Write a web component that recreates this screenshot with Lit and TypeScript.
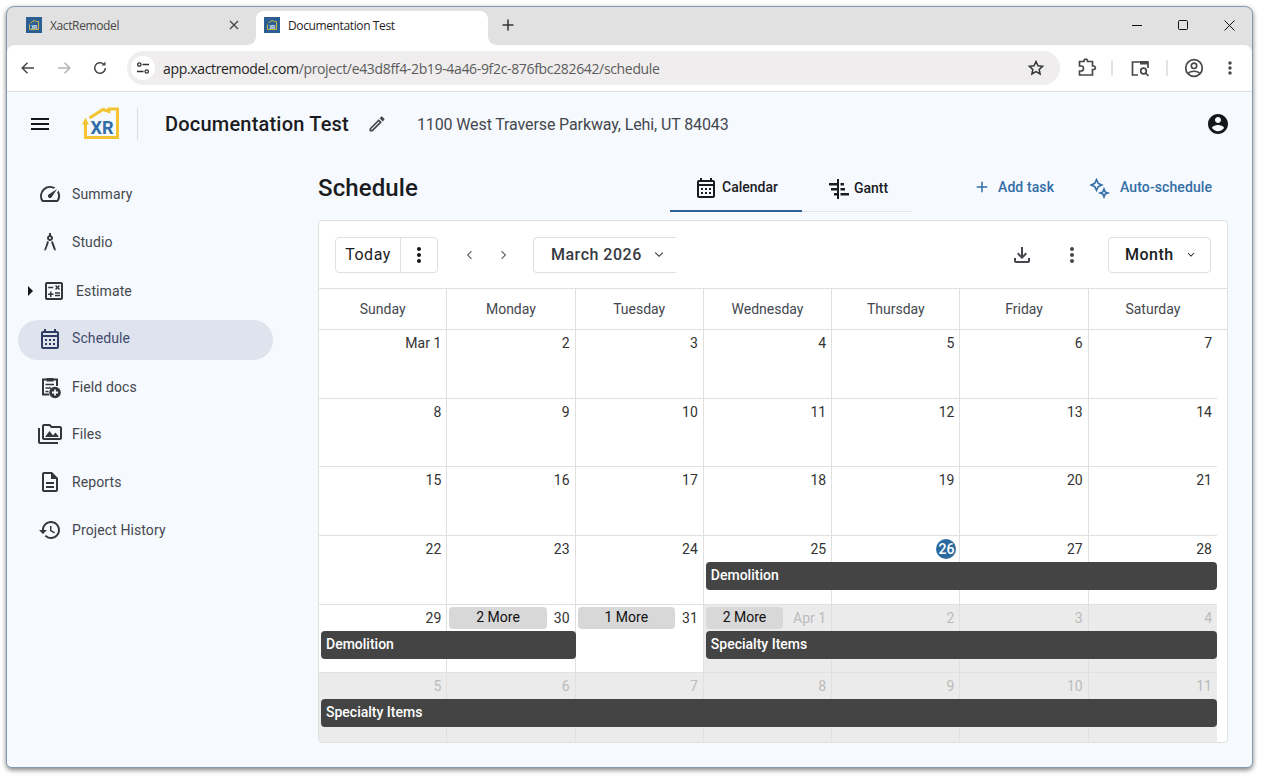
import { css, html, LitElement, svg } from "lit";
import { customElement } from "lit/decorators.js";

const ICONS = {
  menu: "M3 18h18v-2H3v2zm0-5h18v-2H3v2zm0-7v2h18V6H3z",
  edit: "M14.06 9.02l.92.92L5.92 19H5v-.92l9.06-9.06M17.66 3c-.25 0-.51.1-.7.29l-1.83 1.83 3.75 3.75 1.83-1.83c.39-.39.39-1.02 0-1.41l-2.34-2.34c-.2-.2-.45-.29-.71-.29zm-3.6 3.19L3 17.25V21h3.75L17.81 9.94l-3.75-3.75z",
  account: "M12 2C6.48 2 2 6.48 2 12s4.48 10 10 10 10-4.48 10-10S17.52 2 12 2zm0 3c1.66 0 3 1.34 3 3s-1.34 3-3 3-3-1.34-3-3 1.34-3 3-3zm0 14.2c-2.5 0-4.71-1.28-6-3.22.03-1.99 4-3.08 6-3.08 1.99 0 5.97 1.09 6 3.08-1.29 1.94-3.5 3.22-6 3.22z",
  speed: "M20.38 8.57l-1.23 1.85a8 8 0 0 1-.22 7.58H5.07A8 8 0 0 1 15.58 6.85l1.85-1.23A10 10 0 0 0 3.35 19a2 2 0 0 0 1.72 1h13.85a2 2 0 0 0 1.74-1 10 10 0 0 0-.27-10.44zm-9.79 6.84a2 2 0 0 0 2.83 0l5.66-8.49-8.49 5.66a2 2 0 0 0 0 2.83z",
  studio: "M6.36 18.78L6.61 21l1.62-1.54 2.77-7.6c-.68-.17-1.28-.51-1.77-.98l-2.87 8.9zM14.77 10.88c-.49.47-1.1.81-1.77.98l2.77 7.6L17.39 21l.26-2.22-2.88-7.9zM15 8c0-1.3-.84-2.4-2-2.82V3h-2v2.18C9.84 5.6 9 6.7 9 8c0 1.66 1.34 3 3 3s3-1.34 3-3zm-3 1c-.55 0-1-.45-1-1s.45-1 1-1 1 .45 1 1-.45 1-1 1z",
  calc: "M19 3H5c-1.1 0-2 .9-2 2v14c0 1.1.9 2 2 2h14c1.1 0 2-.9 2-2V5c0-1.1-.9-2-2-2zm0 16H5V5h14v14zM6.25 7.72h5v1.5h-5zM13 15.75h5v1.5h-5zM13 13.25h5v1.5h-5zM8 18h1.5v-2h2v-1.5h-2v-2H8v2H6V16h2zM14.09 10.95l1.41-1.41 1.41 1.41 1.06-1.06-1.41-1.42 1.41-1.41-1.06-1.06-1.41 1.41-1.41-1.41-1.06 1.06 1.41 1.41-1.41 1.42z",
  calendar: "M19 4h-1V2h-2v2H8V2H6v2H5c-1.11 0-2 .9-2 2v14c0 1.1.89 2 2 2h14c1.1 0 2-.9 2-2V6c0-1.1-.9-2-2-2zm0 16H5V10h14v10zm0-12H5V6h14v2zM9 14H7v-2h2v2zm4 0h-2v-2h2v2zm4 0h-2v-2h2v2zm-8 4H7v-2h2v2zm4 0h-2v-2h2v2zm4 0h-2v-2h2v2z",
  files: "M2 6H0v5h.01L0 20c0 1.1.9 2 2 2h18v-2H2V6zm5 9h14l-3.5-4.5-2.5 3.01L11.5 9zM22 4h-8l-2-2H6c-1.1 0-1.99.9-1.99 2L4 16c0 1.1.9 2 2 2h16c1.1 0 2-.9 2-2V6c0-1.1-.9-2-2-2zm0 12H6V4h5.17l1.41 1.41.59.59H22v10z",
  report: "M8 16h8v2H8zm0-4h8v2H8zm6-10H6c-1.1 0-2 .9-2 2v16c0 1.1.89 2 1.99 2H18c1.1 0 2-.9 2-2V8l-6-6zm4 18H6V4h7v5h5v11z",
  history: "M13 3c-4.97 0-9 4.03-9 9H1l3.89 3.89.07.14L9 12H6c0-3.87 3.13-7 7-7s7 3.13 7 7-3.13 7-7 7c-1.93 0-3.68-.79-4.94-2.06l-1.42 1.42C8.27 19.99 10.51 21 13 21c4.97 0 9-4.03 9-9s-4.03-9-9-9zm-1 5v5l4.28 2.54.72-1.21-3.5-2.08V8H12z",
  download: "M18 15v3H6v-3H4v3c0 1.1.9 2 2 2h12c1.1 0 2-.9 2-2v-3h-2zm-1-4l-1.41-1.41L13 12.17V4h-2v8.17L8.41 9.59 7 11l5 5 5-5z",
  more: "M12 8c1.1 0 2-.9 2-2s-.9-2-2-2-2 .9-2 2 .9 2 2 2zm0 2c-1.1 0-2 .9-2 2s.9 2 2 2 2-.9 2-2-.9-2-2-2zm0 6c-1.1 0-2 .9-2 2s.9 2 2 2 2-.9 2-2-.9-2-2-2z",
  gantt: "M11 2h2v20h-2zM3 6h8v2.500H3zM5 11h6v2.500H5zM8 16h3v2.500H8zM14.500 6H18v2.500h-3.500zM14.500 11H19v2.500h-4.500zM14.500 16H23v2.500h-8.500z",
  plus: "M19 13h-6v6h-2v-6H5v-2h6V5h2v6h6v2z",
  chevL: "M14.500 7l-5 5 5 5 .9-.9-4.100-4.100 4.100-4.100z",
  chevR: "M9.500 7l5 5-5 5-.9-.9 4.100-4.100-4.100-4.100z",
  chevD: "M7 9.500l5 5 5-5-.9-.9-4.100 4.100-4.100-4.100z",
};

type IconName = keyof typeof ICONS;

const icon = (name: IconName, size = 24) => html`<svg
  class="icon"
  width=${size}
  height=${size}
  viewBox="0 0 24 24"
  fill="currentColor"
>
  <path d=${ICONS[name]}></path>
</svg>`;

const favicon = html`<svg class="favicon" width="16" height="16" viewBox="0 0 16 16">
  <rect width="16" height="16" fill="#2b5f93"></rect>
  <path d="M3.500 7.500V12.500H12.500V4.500H10.500L8 3.500L4.500 6" fill="none" stroke="#c9b24a" stroke-width="1"></path>
  <text x="8" y="11.500" text-anchor="middle" font-size="5" font-weight="700" font-family="Roboto" fill="#dfe8f2">XR</text>
</svg>`;

const logo = html`<svg class="logo" width="38" height="34" viewBox="0 0 38 34">
  <path d="M3.500 15V30.500H35.500V2H27V4.500L21 2.500L7.500 11" fill="none" stroke="#f4c331" stroke-width="3"></path>
  <path d="M0 17.500L3.500 10.500L7 17.500z" fill="#f4c331"></path>
  <text x="20" y="27" text-anchor="middle" font-size="18" font-weight="700" font-family="Roboto" fill="#2f6ea8">XR</text>
</svg>`;

const fieldDocs = html`<svg class="icon" width="24" height="24" viewBox="0 0 24 24" fill="none" stroke="currentColor" stroke-width="2">
  <path d="M11 19.500H5V4.500H19V11"></path>
  <path d="M8.500 3H15.500V6.500H8.500z" fill="currentColor" stroke="none"></path>
  <path d="M7.500 9.500H16M7.500 13H13M7.500 16.500H10.500" stroke-width="1.700"></path>
  <circle cx="17" cy="17.500" r="5.800" fill="currentColor" stroke="none"></circle>
  <path d="M17 14.500V20.500M14 17.500H20" stroke="#f6f9fd" stroke-width="1.800"></path>
</svg>`;

const sparkle = html`<svg class="icon" width="24" height="24" viewBox="0 0 24 24" fill="none" stroke="currentColor" stroke-width="1.600">
  <path d="M8.500 4.700L10.200 8.300L13.800 10L10.200 11.700L8.500 15.300L6.800 11.700L3.200 10L6.800 8.300z"></path>
  <path d="M16 14L17.100 16.900L20 18L17.100 19.100L16 22L14.900 19.100L12 18L14.900 16.900z"></path>
</svg>`;

const stroke = (body: unknown, size = 24) => html`<svg
  class="icon"
  width=${size}
  height=${size}
  viewBox="0 0 24 24"
  fill="none"
  stroke="#474747"
  stroke-width="1.700"
>
  ${body}
</svg>`;

type Cell = { label: string; more?: string; out?: boolean; today?: boolean };
type Bar = { text: string; from: number; to: number; top: number };
type Week = { cells: Cell[]; bars: Bar[] };

const d = (label: string | number, more?: string): Cell => ({ label: String(label), more });
const o = (label: string | number, more?: string): Cell => ({ label: String(label), more, out: true });

const WEEKS: Week[] = [
  { cells: [d("Mar 1"), d(2), d(3), d(4), d(5), d(6), d(7)], bars: [] },
  { cells: [d(8), d(9), d(10), d(11), d(12), d(13), d(14)], bars: [] },
  { cells: [d(15), d(16), d(17), d(18), d(19), d(20), d(21)], bars: [] },
  {
    cells: [d(22), d(23), d(24), d(25), { label: "26", today: true }, d(27), d(28)],
    bars: [{ text: "Demolition", from: 4, to: 8, top: 26 }],
  },
  {
    cells: [d(29), d(30, "2 More"), d(31, "1 More"), o("Apr 1", "2 More"), o(2), o(3), o(4)],
    bars: [
      { text: "Demolition", from: 1, to: 3, top: 26.5 },
      { text: "Specialty Items", from: 4, to: 8, top: 26.5 },
    ],
  },
  {
    cells: [o(5), o(6), o(7), o(8), o(9), o(10), o(11)],
    bars: [{ text: "Specialty Items", from: 1, to: 8, top: 26 }],
  },
];

const DAYS = ["Sunday", "Monday", "Tuesday", "Wednesday", "Thursday", "Friday", "Saturday"];

const NAV = [
  { glyph: icon("speed"), label: "Summary", cls: "" },
  { glyph: icon("studio"), label: "Studio", cls: "" },
  { glyph: icon("calc"), label: "Estimate", cls: "caret" },
  { glyph: icon("calendar"), label: "Schedule", cls: "active" },
  { glyph: fieldDocs, label: "Field docs", cls: "low" },
  { glyph: icon("files"), label: "Files", cls: "" },
  { glyph: icon("report"), label: "Reports", cls: "" },
  { glyph: icon("history"), label: "Project History", cls: "" },
];

@customElement("app-root")
export class AppRoot extends LitElement {
  static styles = css`
    :host {
      display: block;
      width: 1262px;
      height: 777px;
      box-sizing: border-box;
      padding: 6px 9px 9px 6px;
      background: #fff;
      font-family: Roboto, "Liberation Sans", sans-serif;
      overflow: hidden;
    }
    .icon {
      display: block;
      flex: none;
    }
    .window {
      height: 100%;
      box-sizing: border-box;
      border: 1px solid #7f9ab5;
      border-radius: 8px 8px 6px 6px;
      box-shadow: 0 2px 5px rgba(0, 0, 0, 0.5);
      background: #e1e1e1;
      overflow: hidden;
      display: flex;
      flex-direction: column;
    }

    /* browser chrome */
    .tabstrip {
      height: 38px;
      flex: none;
      display: flex;
      align-items: flex-end;
      padding-left: 7px;
      font-family: "Open Sans", "Noto Sans", sans-serif;
      font-size: 12px;
      letter-spacing: -0.38px;
    }
    .tab {
      width: 232px;
      box-sizing: border-box;
      height: 34px;
      display: flex;
      align-items: center;
      gap: 8px;
      padding: 0 7px 6px 12px;
      color: #474747;
      border-radius: 8px 8px 0 0;
      position: relative;
    }
    .tab.active {
      background: #fff;
      color: #1f1f1f;
      margin-left: 10px;
      padding-left: 8px;
    }
    .tab.active::before,
    .tab.active::after {
      content: "";
      position: absolute;
      bottom: 0;
      width: 8px;
      height: 8px;
    }
    .tab.active::before {
      left: -8px;
      background: radial-gradient(circle at 0 0, transparent 7.5px, #fff 8px);
    }
    .tab.active::after {
      right: -8px;
      background: radial-gradient(circle at 100% 0, transparent 7.5px, #fff 8px);
    }
    .tab span {
      flex: 1;
    }
    .new-tab {
      margin-left: 14px;
      height: 34px;
      padding-bottom: 6px;
      box-sizing: border-box;
      display: flex;
      align-items: center;
    }
    .winctl {
      margin-left: auto;
      height: 38px;
      padding-bottom: 2px;
      box-sizing: border-box;
      display: flex;
      align-items: center;
    }
    .winctl div {
      width: 46px;
      display: flex;
      justify-content: center;
    }
    .browserbar {
      height: 47px;
      flex: none;
      box-sizing: border-box;
      background: #fff;
      border-bottom: 1px solid #dfdfdf;
      border-radius: 8px 8px 0 0;
      display: flex;
      align-items: center;
      padding-left: 3px;
    }
    .navbtn {
      width: 36px;
      display: flex;
      justify-content: center;
      color: #474747;
    }
    .navbtn.off {
      color: #b4b4b4;
    }
    .omnibox {
      width: 933px;
      height: 34px;
      margin-left: 9px;
      flex: none;
      box-sizing: border-box;
      border-radius: 17px;
      background: #efedee;
      display: flex;
      align-items: center;
      padding: 0 15px 0 4px;
      font-family: "Open Sans", "Noto Sans", sans-serif;
      font-size: 14px;
      letter-spacing: -0.34px;
      color: #1f1f1f;
    }
    .tune {
      width: 24px;
      height: 24px;
      border-radius: 50%;
      background: #fff;
      display: flex;
      align-items: center;
      justify-content: center;
      margin-right: 8px;
      flex: none;
    }
    .url {
      flex: 1;
      white-space: nowrap;
    }
    .url i {
      font-style: normal;
      color: #5c5c5c;
    }
    .tools {
      display: flex;
      align-items: center;
      margin-left: 15px;
    }
    .sep {
      width: 2px;
      height: 16px;
      background: #e3e3e3;
    }
    .tools .ext {
      margin-right: 12px;
    }
    .tools .lens {
      margin: 0 14px 0 15px;
    }
    .tools .profile {
      margin-left: 14px;
    }
    .tools .kebab {
      margin-left: 14px;
      color: #474747;
    }

    /* app */
    .app {
      flex: 1;
      min-height: 0;
      background: #f6f9fd;
      display: flex;
      flex-direction: column;
    }
    .appbar {
      height: 64px;
      flex: none;
      display: flex;
      align-items: center;
      padding-right: 22px;
    }
    .appbar .ham {
      margin-left: 21px;
      color: #15171a;
    }
    .logo {
      display: block;
      margin-left: 30px;
      flex: none;
    }
    .vr {
      width: 1px;
      height: 32px;
      margin-left: 17px;
      background: #d9dde2;
    }
    .project {
      margin-left: 27px;
      font-size: 20px;
      font-weight: 500;
      color: #1a1c1f;
      letter-spacing: 0.2px;
    }
    .pencil {
      margin-left: 18px;
      color: #44474e;
    }
    .address {
      margin-left: 30px;
      font-size: 16px;
      letter-spacing: -0.12px;
      color: #44474e;
    }
    .me {
      margin-left: auto;
      color: #15171a;
    }
    .body {
      flex: 1;
      display: flex;
      min-height: 0;
    }
    .sidebar {
      width: 311px;
      flex: none;
      box-sizing: border-box;
      padding: 18px 0 0 11px;
      display: flex;
      flex-direction: column;
      gap: 8px;
    }
    .nav {
      width: 255px;
      height: 40px;
      flex: none;
      box-sizing: border-box;
      border-radius: 20px;
      display: flex;
      align-items: center;
      gap: 10px;
      padding-left: 20px;
      font-size: 14px;
      letter-spacing: 0.1px;
      color: #44474e;
      position: relative;
    }
    .nav .icon {
      color: #33363d;
    }
    .nav.active {
      background: #dfe3ee;
      color: #3f4a6b;
      margin: 2px 0 -2px;
      padding-bottom: 4px;
    }
    .nav.active .icon {
      color: #2f3d66;
      margin-top: 2px;
    }
    .nav.low {
      padding-top: 2px;
    }
    .nav.caret {
      padding-left: 24px;
      padding-top: 2px;
    }
    .nav.caret::before {
      content: "";
      position: absolute;
      left: 10px;
      top: 16px;
      border-left: 5px solid #15171a;
      border-top: 5px solid transparent;
      border-bottom: 5px solid transparent;
    }
    .main {
      width: 910px;
      flex: none;
      display: flex;
      flex-direction: column;
      padding-top: 9px;
    }
    .head {
      height: 47px;
      display: flex;
      align-items: flex-start;
    }
    .head h1 {
      margin: 0;
      width: 352px;
      font-size: 24px;
      letter-spacing: 0.1px;
      line-height: 46px;
      font-weight: 500;
      color: #1a1c1f;
      flex: none;
    }
    .viewtabs {
      display: flex;
      width: 242px;
      height: 47px;
      flex: none;
      box-sizing: border-box;
      border-bottom: 1px solid #e2e6ea;
    }
    .viewtab {
      height: 47px;
      flex: none;
      box-sizing: border-box;
      display: flex;
      align-items: center;
      justify-content: center;
      gap: 4px;
      padding-bottom: 2px;
      font-size: 14px;
      font-weight: 500;
      color: #1a1c1f;
    }
    .viewtab .icon {
      margin-top: 2px;
    }
    .viewtab.on {
      width: 132px;
      border-bottom: 2px solid #2a6499;
    }
    .viewtab.off {
      width: 110px;
    }
    .action {
      display: flex;
      align-items: center;
      height: 43px;
      font-size: 14px;
      letter-spacing: 0.1px;
      font-weight: 500;
      color: #336ea6;
      gap: 7px;
      flex: none;
    }
    .action.add {
      margin-left: 61px;
    }
    .action.auto {
      margin-left: 34px;
      gap: 8px;
    }
    .card {
      margin-top: 8px;
      height: 523px;
      box-sizing: border-box;
      border: 1px solid #e0e0e0;
      border-radius: 4px;
      background: #fff;
      overflow: hidden;
    }
    .cal-tools {
      height: 68px;
      box-sizing: border-box;
      border-bottom: 1px solid #e0e0e0;
      display: flex;
      align-items: center;
      padding: 0 16px;
    }
    .group {
      display: flex;
      height: 36px;
      box-sizing: border-box;
      border: 1px solid #e0e0e0;
      border-radius: 4px;
      align-items: center;
      font-size: 16px;
      color: #1a1c1f;
      letter-spacing: 0.5px;
    }
    .group .today {
      width: 65px;
      height: 100%;
      box-sizing: border-box;
      display: flex;
      align-items: center;
      justify-content: center;
      border-right: 1px solid #e0e0e0;
    }
    .group .dots {
      width: 36px;
      display: flex;
      justify-content: center;
      color: #15171a;
    }
    .arrow {
      width: 35px;
      display: flex;
      justify-content: center;
      color: #55585f;
    }
    .arrows {
      display: flex;
      margin-left: 13px;
      margin-right: 12px;
    }
    .select {
      height: 36px;
      box-sizing: border-box;
      border: 1px solid #e0e0e0;
      border-radius: 4px;
      display: flex;
      align-items: center;
      font-size: 16px;
      font-weight: 500;
      letter-spacing: 0.5px;
      color: #36393f;
    }
    .select.month {
      width: 143px;
      border-right: 0;
      border-radius: 4px 0 0 4px;
      padding-left: 17px;
      gap: 7px;
    }
    .select.range {
      width: 103px;
      padding-left: 16px;
      gap: 9px;
      color: #1a1c1f;
    }
    .spacer {
      flex: 1;
    }
    .tool {
      color: #44474e;
      display: flex;
    }
    .tool.dl {
      margin-right: 26px;
    }
    .tool.mv {
      margin-right: 24px;
    }
    .grid-head,
    .week {
      display: grid;
      grid-template-columns: repeat(7, minmax(0, 1fr));
      margin-right: 10px;
    }
    .head-wrap {
      height: 41.2px;
      box-sizing: border-box;
      border-bottom: 1px solid #e0e0e0;
    }
    .grid-head {
      height: 100%;
    }
    .grid-head div {
      display: flex;
      align-items: center;
      justify-content: center;
      font-size: 14px;
      color: #44474e;
      border-right: 1px solid #e0e0e0;
    }
    .grid-head div:last-child {
      border-right: 0;
    }
    .week {
      height: 68.6px;
      box-sizing: border-box;
      border-bottom: 1px solid #e0e0e0;
      grid-template-rows: 1fr;
    }
    .week:last-child {
      height: 70px;
      border-bottom: 0;
    }
    .cell {
      grid-row: 1;
      min-width: 0;
      border-right: 1px solid #e0e0e0;
      display: flex;
      align-items: flex-start;
      justify-content: flex-end;
      padding: 2px 5px 0 2px;
      font-size: 14px;
      line-height: 23px;
      color: #333;
    }
    .cell:nth-child(7) {
      border-right: 0;
    }
    .cell.out {
      background: #ebebeb;
      color: #bbb;
    }
    .cell .num {
      white-space: nowrap;
    }
    .cell .today {
      width: 20px;
      height: 20px;
      margin: 1px -2px 0 0;
      border-radius: 50%;
      background: #2a6a9e;
      color: #fff;
      text-align: center;
      line-height: 20px;
      font-weight: 500;
    }
    .more {
      flex: 1;
      height: 22px;
      margin-right: 7px;
      border-radius: 4px;
      background: #d8d8d8;
      color: #111;
      text-align: center;
      line-height: 21px;
      white-space: nowrap;
    }
    .cell.out .more {
      margin-right: 10px;
    }
    .bar {
      grid-row: 1;
      align-self: start;
      height: 28px;
      margin-left: 2px;
      box-sizing: border-box;
      border-radius: 4px;
      background: #444;
      color: #fff;
      font-size: 14px;
      font-weight: 500;
      line-height: 26px;
      padding-left: 5px;
      z-index: 1;
    }
  `;

  private renderChrome() {
    return html`
      <div class="tabstrip">
        <div class="tab">
          ${favicon}<span>XactRemodel</span>
          <svg width="10" height="10" viewBox="0 0 10 10" stroke="#474747" stroke-width="1.400"><path d="M1 1L9 9M9 1L1 9"></path></svg>
        </div>
        <div class="tab active">${favicon}<span>Documentation Test</span></div>
        <div class="new-tab">
          <svg width="12" height="12" viewBox="0 0 12 12" stroke="#333" stroke-width="1.500"><path d="M6 0.500V11.500M0.500 6H11.500"></path></svg>
        </div>
        <div class="winctl">
          <div><svg width="10" height="10" viewBox="0 0 10 10" stroke="#111" stroke-width="1"><path d="M0 5.500H10"></path></svg></div>
          <div><svg width="10" height="10" viewBox="0 0 10 10" fill="none" stroke="#111" stroke-width="1"><rect x="0.500" y="0.500" width="9" height="9" rx="1"></rect></svg></div>
          <div><svg width="11" height="11" viewBox="0 0 11 11" stroke="#111" stroke-width="1"><path d="M0.500 0.500L10.500 10.500M10.500 0.500L0.500 10.500"></path></svg></div>
        </div>
      </div>
      <div class="browserbar">
        <div class="navbtn">
          <svg width="16" height="16" viewBox="0 0 16 16" fill="none" stroke="currentColor" stroke-width="1.500"><path d="M14 8H2.500M7.500 2.800L2.200 8L7.500 13.200"></path></svg>
        </div>
        <div class="navbtn off">
          <svg width="16" height="16" viewBox="0 0 16 16" fill="none" stroke="currentColor" stroke-width="1.500"><path d="M2 8H13.500M8.500 2.800L13.800 8L8.500 13.200"></path></svg>
        </div>
        <div class="navbtn">
          <svg width="16" height="16" viewBox="0 0 16 16" fill="none" stroke="currentColor" stroke-width="1.500"><path d="M13.300 8A5.300 5.300 0 1 1 11.500 4"></path><path d="M13.500 1.500V5.500H9.500" fill="currentColor" stroke="none"></path></svg>
        </div>
        <div class="omnibox">
          <div class="tune">
            <svg width="14" height="14" viewBox="0 0 14 14" fill="none" stroke="#333" stroke-width="1.300"><circle cx="3.300" cy="3.500" r="1.700"></circle><path d="M6.500 3.500H13M1 10.500H7.500"></path><circle cx="10.700" cy="10.500" r="1.700"></circle></svg>
          </div>
          <div class="url">app.xactremodel.com<i>/project/e43d8ff4-2b19-4a46-9f2c-876fbc282642/schedule</i></div>
          <svg width="18" height="18" viewBox="0 0 18 18" fill="none" stroke="#333" stroke-width="1.500"><path d="M9 2.500L11 6.800L15.600 7.300L12.200 10.400L13.100 15L9 12.700L4.900 15L5.800 10.400L2.400 7.300L7 6.800z"></path></svg>
        </div>
        <div class="tools">
          <div class="ext">
            ${stroke(svg`<path d="M5 5.500H9.500V4.500A1.800 1.800 0 0 1 13 4.500V5.500H18V10H19.500A1.800 1.800 0 0 1 19.500 13.500H18V19H5V15H6.500A2.500 2.500 0 0 0 6.500 10H5z" transform="translate(-0.500 0)"></path>`)}
          </div>
          <div class="sep"></div>
          <div class="lens">
            ${stroke(svg`<path d="M10 19H4.500V6H20V12"></path><rect x="12" y="5" width="8" height="3.500" fill="#474747" stroke="none"></rect><circle cx="15.500" cy="15" r="2.800"></circle><path d="M17.500 17L20.500 20"></path>`)}
          </div>
          <div class="sep"></div>
          <div class="profile">
            ${stroke(svg`<circle cx="12" cy="12" r="8.300"></circle><circle cx="12" cy="9.800" r="2.700"></circle><path d="M6.500 17.500C8 14.500 16 14.500 17.500 17.500"></path>`)}
          </div>
          <div class="kebab">${icon("more", 20)}</div>
        </div>
      </div>
    `;
  }

  private renderCalendar() {
    return html`
      <div class="head-wrap">
        <div class="grid-head">${DAYS.map((day) => html`<div>${day}</div>`)}</div>
      </div>
      ${WEEKS.map(
        (week) => html`
          <div class="week">
            ${week.cells.map(
              (c, i) => html`
                <div class="cell ${c.out ? "out" : ""}" style="grid-column:${i + 1}">
                  ${c.more ? html`<div class="more">${c.more}</div>` : ""}
                  <div class="num ${c.today ? "today" : ""}">${c.label}</div>
                </div>
              `
            )}
            ${week.bars.map(
              (b) => html`<div
                class="bar"
                style="grid-column:${b.from}/${b.to};margin-top:${b.top}px"
              >
                ${b.text}
              </div>`
            )}
          </div>
        `
      )}
    `;
  }

  render() {
    return html`
      <div class="window">
        ${this.renderChrome()}
        <div class="app">
          <div class="appbar">
            <div class="ham">${icon("menu")}</div>
            ${logo}
            <div class="vr"></div>
            <div class="project">Documentation Test</div>
            <div class="pencil">${icon("edit", 20)}</div>
            <div class="address">1100 West Traverse Parkway, Lehi, UT 84043</div>
            <div class="me">${icon("account")}</div>
          </div>
          <div class="body">
            <nav class="sidebar">
              ${NAV.map((n) => html`<div class="nav ${n.cls}">${n.glyph}<span>${n.label}</span></div>`)}
            </nav>
            <div class="main">
              <div class="head">
                <h1>Schedule</h1>
                <div class="viewtabs">
                  <div class="viewtab on">${icon("calendar")}Calendar</div>
                  <div class="viewtab off">${icon("gantt")}Gantt</div>
                </div>
                <div class="action add">${icon("plus", 18)}Add task</div>
                <div class="action auto">${sparkle}Auto-schedule</div>
              </div>
              <div class="card">
                <div class="cal-tools">
                  <div class="group">
                    <div class="today">Today</div>
                    <div class="dots">${icon("more")}</div>
                  </div>
                  <div class="arrows">
                    <div class="arrow">${icon("chevL", 20)}</div>
                    <div class="arrow">${icon("chevR", 20)}</div>
                  </div>
                  <div class="select month">March 2026 ${icon("chevD", 20)}</div>
                  <div class="spacer"></div>
                  <div class="tool dl">${icon("download")}</div>
                  <div class="tool mv">${icon("more")}</div>
                  <div class="select range">Month ${icon("chevD", 16)}</div>
                </div>
                ${this.renderCalendar()}
              </div>
            </div>
          </div>
        </div>
      </div>
    `;
  }
}
